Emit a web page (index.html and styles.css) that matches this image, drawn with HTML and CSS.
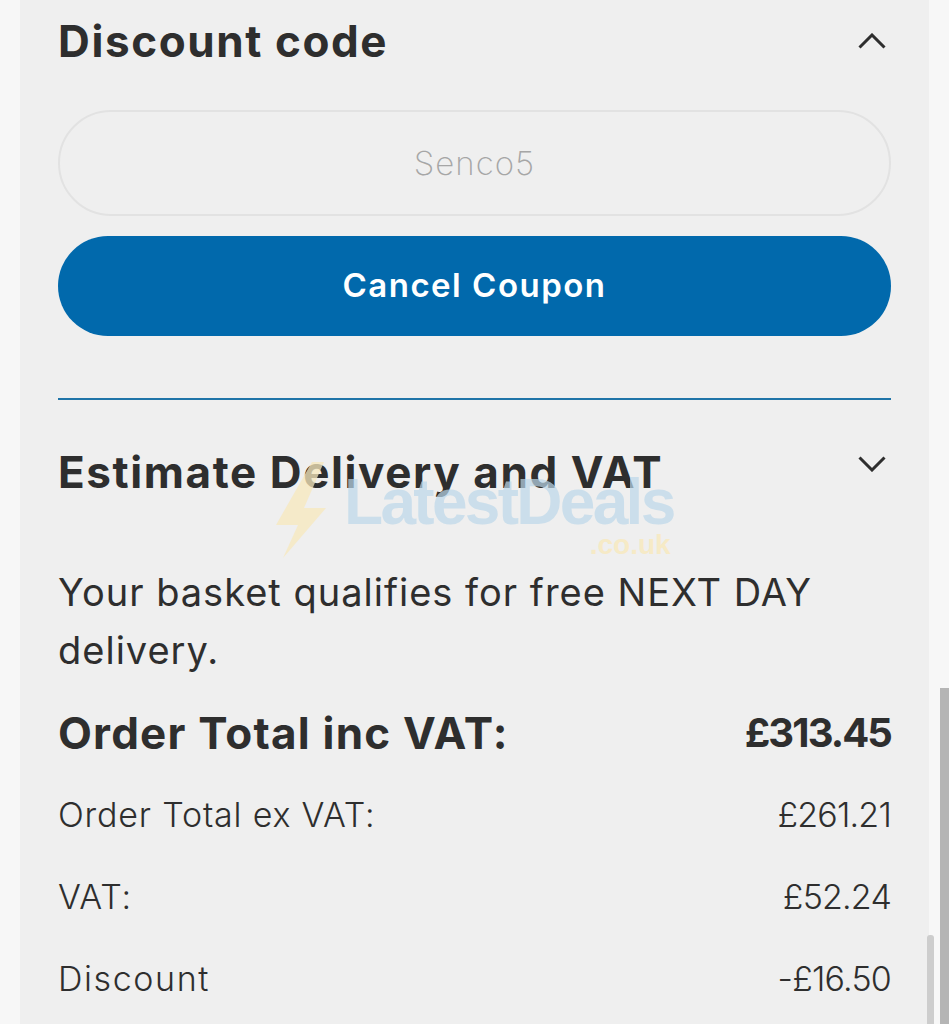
FILE: index.html
```html
<!DOCTYPE html>
<html lang="en">
<head>
    <meta charset="UTF-8">
    <meta name="viewport" content="width=device-width, initial-scale=1.0">
    <title>Basket</title>
    <link rel="stylesheet" href="styles.css">
</head>
<body>
    <div class="panel">
        <div class="section-head discount-head">
            <h2>Discount code</h2>
            <svg class="chevron" viewBox="0 0 28 16"><path d="M1.5 14.5 14 2l12.500 12.500"/></svg>
        </div>
        <div class="coupon-input">Senco5</div>
        <div class="coupon-btn">Cancel Coupon</div>
        <hr class="divider">
        <div class="section-head delivery-head">
            <h2>Estimate Delivery and VAT</h2>
            <svg class="chevron" viewBox="0 0 28 16"><path d="M1.500 1.500 14 14 26.500 1.500"/></svg>
        </div>
        <p class="delivery-note">Your basket qualifies for free NEXT DAY delivery.</p>
        <div class="total-row">
            <span>Order Total inc VAT:</span>
            <span class="price">£313.45</span>
        </div>
        <div class="sub-row">
            <span>Order Total ex VAT:</span>
            <span class="price">£261.21</span>
        </div>
        <div class="sub-row">
            <span>VAT:</span>
            <span class="price">£52.24</span>
        </div>
        <div class="sub-row">
            <span>Discount</span>
            <span class="price">-£16.50</span>
        </div>
    </div>

    <!-- site watermark over the screenshot -->
    <div class="watermark">
        <svg class="bolt" viewBox="0 0 52 100"><path d="M38 2 2 65h22L9 98 52 48H30L50 2z"/></svg>
        <div class="mark-text">
            <div class="mark-name">LatestDeals</div>
            <div class="mark-tld">.co.uk</div>
        </div>
    </div>

    <div class="inner-scroll"></div>
    <div class="outer-scroll"></div>
</body>
</html>
```

FILE: styles.css
```css
html, body {
  margin: 0;
  height: 1024px;
  overflow: hidden;
}

body {
  background-color: #f7f7f7;
  color: #2e2e2e;
  font-family: "Inter", "Open Sans", sans-serif;
}

.panel {
  box-sizing: border-box;
  width: 909px;
  height: 1024px;
  margin-left: 20px;
  padding: 0 38px;
  background-color: #efefef;
}

/* Section headings */
.section-head {
  display: flex;
  justify-content: space-between;
}

.section-head h2 {
  margin: 0;
  font-size: 44px;
  font-weight: 700;
  line-height: 50px;
  letter-spacing: 1.6px;
}

.discount-head {
  padding-top: 16px;
}

.delivery-head {
  margin-top: 47px;
}

.chevron {
  width: 28px;
  height: 16px;
  margin-right: 5px;
  fill: none;
  stroke: #2e2e2e;
  stroke-width: 3;
}

.discount-head .chevron {
  margin-top: 17px;
}

.delivery-head .chevron {
  margin-top: 9px;
}

/* Coupon */
.coupon-input {
  box-sizing: border-box;
  height: 106px;
  margin-top: 44px;
  border: 2px solid #e2e2e2;
  border-radius: 53px;
  color: #a6a6a6;
  font-size: 33px;
  font-weight: 200;
  line-height: 102px;
  letter-spacing: 1px;
  text-align: center;
}

.coupon-btn {
  height: 100px;
  margin-top: 20px;
  border-radius: 50px;
  background-color: #0169ac;
  color: #fff;
  font-size: 33px;
  font-weight: 600;
  line-height: 98px;
  letter-spacing: 1.5px;
  text-align: center;
}

.divider {
  height: 2px;
  margin: 62px 0 0;
  border: none;
  background-color: #1f74a8;
}

/* Totals */
.delivery-note {
  margin: 66px 0 0;
  font-size: 38px;
  font-weight: 400;
  line-height: 58px;
  letter-spacing: 1px;
}

.total-row, .sub-row {
  display: flex;
  justify-content: space-between;
}

.total-row {
  margin-top: 26px;
  font-size: 44px;
  font-weight: 700;
  line-height: 56px;
  letter-spacing: 1.2px;
}

.total-row .price {
  font-size: 40px;
  letter-spacing: -1.9px;
}

.sub-row {
  height: 82px;
  font-size: 34px;
  font-weight: 300;
  line-height: 82px;
  letter-spacing: 0.8px;
}

.sub-row:last-child span:first-child {
  letter-spacing: 1.6px;
}

.sub-row .price {
  letter-spacing: -0.8px;
}

.total-row + .sub-row {
  margin-top: 13px;
}

/* Watermark */
.watermark {
  position: absolute;
  top: 460px;
  left: 274px;
  display: flex;
  gap: 18px;
  pointer-events: none;
}

.bolt {
  width: 52px;
  height: 100px;
  fill: #f8e9bd;
  opacity: 0.75;
}

.mark-text {
  font-family: "Liberation Sans", sans-serif;
  font-weight: 700;
}

.mark-name {
  margin-top: 12px;
  color: #bcd8ea;
  font-size: 64px;
  line-height: 60px;
  letter-spacing: -2.7px;
  opacity: 0.7;
}

.mark-tld {
  padding-right: 3px;
  color: #f8e9bd;
  font-size: 28px;
  line-height: 26px;
  text-align: right;
  opacity: 0.8;
}

/* Scrollbars */
.inner-scroll {
  position: absolute;
  top: 935px;
  left: 927px;
  width: 7px;
  height: 89px;
  border-radius: 3px 3px 0 0;
  background-color: #cdcdcd;
}

.outer-scroll {
  position: absolute;
  top: 688px;
  left: 940px;
  width: 9px;
  height: 336px;
  background-color: #b5b5b5;
}
```
